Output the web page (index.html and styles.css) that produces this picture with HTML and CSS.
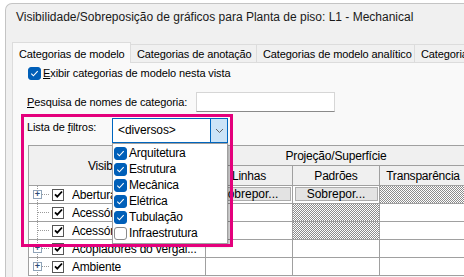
FILE: index.html
```html
<!DOCTYPE html>
<html lang="pt">
<head>
  <meta charset="UTF-8" />
  <title>Visibilidade/Sobreposição de gráficos</title>
  <link rel="stylesheet" href="styles.css">
</head>
<body>
  <svg class="defs" aria-hidden="true">
    <defs>
      <pattern id="checker" width="2" height="2" patternUnits="userSpaceOnUse">
        <rect width="2" height="2" fill="#fff" />
        <rect width="1" height="1" fill="#8c8c8c" />
        <rect x="1" y="1" width="1" height="1" fill="#8c8c8c" />
      </pattern>
    </defs>
  </svg>

  <div class="window">
    <div class="titlebar">Visibilidade/Sobreposição de gráficos para Planta de piso: L1 - Mechanical</div>

    <div class="tabs">
      <div class="tab active t1">Categorias de modelo</div>
      <div class="tab t2">Categorias de anotação</div>
      <div class="tab t3">Categorias de modelo analítico</div>
      <div class="tab">Categorias importadas</div>
    </div>

    <div class="panel">
      <!-- Show categories -->
      <label class="row show">
        <span class="check on">
          <svg viewBox="0 0 13 13"><path d="M3.3 6.7l2.1 2.1 4.3-4.6" /></svg>
        </span>
        <span><u>E</u>xibir categorias de modelo nesta vista</span>
      </label>

      <!-- Search -->
      <div class="row search">
        <span class="search-label"><u>P</u>esquisa de nomes de categoria:</span>
        <span class="textbox"></span>
      </div>

      <!-- Filter list -->
      <div class="row filter">
        <span class="filter-label">Lista de <u>f</u>iltros:</span>
        <div class="combo">
          <span class="combo-text">&lt;diversos&gt;</span>
          <span class="combo-btn">
            <svg viewBox="0 0 9 6"><path d="M1 1l3.5 3.5L8 1" /></svg>
          </span>
          <ul class="combo-list">
            <li><span class="check on"><svg viewBox="0 0 13 13"><path d="M3.3 6.7l2.1 2.1 4.3-4.6" /></svg></span>Arquitetura</li>
            <li><span class="check on"><svg viewBox="0 0 13 13"><path d="M3.3 6.7l2.1 2.1 4.3-4.6" /></svg></span>Estrutura</li>
            <li><span class="check on"><svg viewBox="0 0 13 13"><path d="M3.3 6.7l2.1 2.1 4.3-4.6" /></svg></span>Mecânica</li>
            <li><span class="check on"><svg viewBox="0 0 13 13"><path d="M3.3 6.7l2.1 2.1 4.3-4.6" /></svg></span>Elétrica</li>
            <li><span class="check on"><svg viewBox="0 0 13 13"><path d="M3.3 6.7l2.1 2.1 4.3-4.6" /></svg></span>Tubulação</li>
            <li><span class="check"></span>Infraestrutura</li>
          </ul>
        </div>
      </div>

      <!-- Category grid -->
      <table class="grid">
        <colgroup>
          <col class="c-vis"><col class="c-col"><col class="c-col"><col class="c-col">
        </colgroup>
        <thead>
          <tr>
            <th rowspan="2">Visibilidade</th>
            <th colspan="3">Projeção/Superfície</th>
          </tr>
          <tr>
            <th>Linhas</th>
            <th>Padrões</th>
            <th>Transparência</th>
          </tr>
        </thead>
        <tbody>
          <tr>
            <td><div class="node"><span class="twig"><span class="plus">+</span></span><span class="box"><svg viewBox="0 0 11 11"><path d="M2 5.3l2.3 2.4L9 2.5" /></svg></span><span class="name">Aberturas</span></div></td>
            <td><button class="override">Sobrepor...</button></td>
            <td><button class="override">Sobrepor...</button></td>
            <td><svg class="hatch"><rect width="100%" height="100%" fill="url(#checker)" /></svg></td>
          </tr>
          <tr>
            <td><div class="node"><span class="twig leaf"></span><span class="box"><svg viewBox="0 0 11 11"><path d="M2 5.3l2.3 2.4L9 2.5" /></svg></span><span class="name">Acessórios de iluminação</span></div></td>
            <td></td>
            <td><svg class="hatch"><rect width="100%" height="100%" fill="url(#checker)" /></svg></td>
            <td></td>
          </tr>
          <tr>
            <td><div class="node"><span class="twig leaf"></span><span class="box"><svg viewBox="0 0 11 11"><path d="M2 5.3l2.3 2.4L9 2.5" /></svg></span><span class="name">Acessórios elétricos</span></div></td>
            <td></td>
            <td><svg class="hatch"><rect width="100%" height="100%" fill="url(#checker)" /></svg></td>
            <td></td>
          </tr>
          <tr>
            <td><div class="node"><span class="twig"><span class="plus">+</span></span><span class="box"><svg viewBox="0 0 11 11"><path d="M2 5.3l2.3 2.4L9 2.5" /></svg></span><span class="name">Acopladores do vergal...</span></div></td>
            <td></td>
            <td></td>
            <td></td>
          </tr>
          <tr>
            <td><div class="node"><span class="twig"><span class="plus">+</span></span><span class="box"><svg viewBox="0 0 11 11"><path d="M2 5.3l2.3 2.4L9 2.5" /></svg></span><span class="name">Ambiente</span></div></td>
            <td></td>
            <td></td>
            <td></td>
          </tr>
        </tbody>
      </table>
    </div>
  </div>

  <!-- highlight annotation -->
  <div class="highlight"></div>
</body>
</html>
```

FILE: styles.css
```css
body { margin: 0; background: #fff; font-family: "Segoe UI", "Liberation Sans", Arial, sans-serif; font-size: 11px; letter-spacing: -0.1px; color: #000; overflow: hidden; }
.defs { display: block; width: 0; height: 0; }

.window { margin: 3px 0 0 5px; height: 290px; background: #f0f0f0; border: 1px solid #c4c4c4; border-right: none; border-bottom: none; border-top-left-radius: 7px; overflow: hidden; }
.titlebar { height: 26px; line-height: 26px; padding-left: 10px; font-size: 12px; letter-spacing: 0; color: #1a1a1a; white-space: nowrap; }

.tabs { display: flex; align-items: flex-end; margin-top: 12px; padding-left: 6px; height: 20px; white-space: nowrap; }
.tab { flex: none; height: 18px; line-height: 19px; padding: 0 6px; box-sizing: border-box; text-align: center; border: 1px solid #dcdcdc; border-bottom: none; border-left: none; background: #f0f0f0; }
.tab.active { line-height: 23px; background: #f9f9f9; border-left: 1px solid #dcdcdc; position: relative; z-index: 1; margin-bottom: -1px; height: 21px; }
.t1 { width: 119px; }
.t2 { width: 126px; }
.t3 { width: 158px; }

.panel { margin-left: 6px; background: #f9f9f9; border-top: 1px solid #dcdcdc; border-left: 1px solid #dcdcdc; padding-left: 15px; height: 220px; }

.row { display: flex; align-items: center; white-space: nowrap; }
.show { height: 20px; gap: 2px; }
.search { height: 20px; margin-top: 9px; }
.search-label { width: 169px; margin-left: -1px; }
.textbox { width: 137px; height: 18px; background: #fff; border: 1px solid #d6d6d6; border-bottom-color: #8a8a8a; }
.filter { height: 25px; margin-top: 6px; align-items: flex-start; }
.filter-label { width: 85px; margin-left: -1px; line-height: 18px; }

.check { display: inline-flex; width: 13px; height: 13px; box-sizing: border-box; border: 1px solid #8a8a8a; border-radius: 3px; background: #fff; flex: none; }
.check.on { background: #005fb8; border-color: #005fb8; }
.check svg { width: 13px; height: 13px; margin: -1px; }
.check path { fill: none; stroke: #fff; stroke-width: 1.1; }

.combo { position: relative; width: 116px; height: 25px; box-sizing: border-box; border: 1px solid #0067c0; background: #fff; display: flex; }
.combo-text { flex: 1; line-height: 23px; padding-left: 5px; font-size: 12px; }
.combo-btn { width: 16px; background: #cce4f7; border-left: 1px solid #0067c0; display: flex; align-items: center; justify-content: center; }
.combo-btn svg { width: 9px; height: 6px; }
.combo-btn path { fill: none; stroke: #606060; stroke-width: 1; }

.combo-list { position: absolute; left: -1px; top: 24px; width: 116px; margin: 0; padding: 1px 0 2px; list-style: none; box-sizing: border-box; background: #fff; border: 1px solid #a0a0a0; box-shadow: 2px 2px 3px rgba(0, 0, 0, 0.3); z-index: 5; font-size: 12px; letter-spacing: -0.2px; }
.combo-list li { height: 16px; display: flex; align-items: center; gap: 2px; padding-left: 1px; }

.grid { margin-top: 2px; border-collapse: collapse; table-layout: fixed; width: 439px; background: #fff; font-size: 12px; letter-spacing: -0.2px; }
.c-vis { width: 177px; }
.c-col { width: 87px; }
.grid th { height: 19px; padding: 0; font-weight: normal; background: #f0f0f0; border: 1px solid #a0a0a0; white-space: nowrap; }
.grid td { height: 17px; padding: 0; border: 1px solid #a0a0a0; vertical-align: top; }
.hatch { display: block; width: 100%; height: 17px; }

.node { display: flex; align-items: center; height: 17px; white-space: nowrap; overflow: hidden; }
.twig { width: 23px; height: 17px; flex: none; display: flex; align-items: center; padding-left: 4px; box-sizing: border-box;
  background:
    repeating-linear-gradient(to bottom, #9a9a9a 0 1px, transparent 1px 2px) 8px 0 / 1px 100% no-repeat,
    repeating-linear-gradient(to right, #9a9a9a 0 1px, transparent 1px 2px) 13px 8px / 8px 1px no-repeat; }
.twig.leaf { background:
    repeating-linear-gradient(to bottom, #9a9a9a 0 1px, transparent 1px 2px) 8px 0 / 1px 100% no-repeat,
    repeating-linear-gradient(to right, #9a9a9a 0 1px, transparent 1px 2px) 9px 8px / 12px 1px no-repeat; }
.plus { width: 9px; height: 9px; box-sizing: border-box; border: 1px solid #8fa3b8; background: #fff; color: #2b4a7a; font-size: 9px; line-height: 6px; text-align: center; font-weight: bold; letter-spacing: 0; }
.box { display: inline-flex; width: 12px; height: 12px; box-sizing: border-box; border: 1px solid #555; background: #fff; margin-right: 8px; flex: none; }
.box svg { width: 11px; height: 11px; margin: -0.5px; }
.box path { fill: none; stroke: #000; stroke-width: 1.8; }
.name { overflow: hidden; }

.override { display: block; width: 83px; height: 14px; margin: 1px auto 0; padding: 0; font: inherit; line-height: 12px; background: #e3e3e3; border: 1px solid #adadad; color: #000; }

.highlight { position: absolute; left: 21px; top: 114px; width: 212px; height: 133px; box-sizing: border-box; border: 3px solid #e4007c; z-index: 10; pointer-events: none; }
```
